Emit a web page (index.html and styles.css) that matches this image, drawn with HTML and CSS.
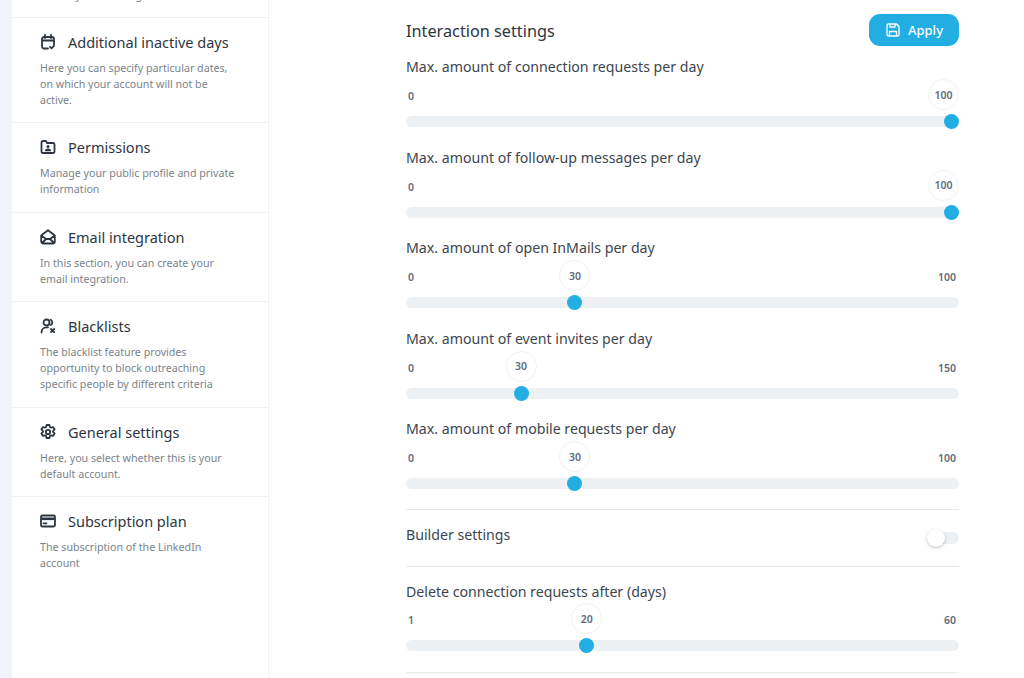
FILE: index.html
```html
<!DOCTYPE html>
<html lang="en">
<head>
<meta charset="utf-8">
<title>Settings</title>
<link rel="stylesheet" href="styles.css">
</head>
<body>
<div class="panel">
  <aside class="sidebar">
    <div class="stub"><p class="desc">Define your working hours</p></div>
    <section class="item item-3">
      <h3 class="title"><svg class="icon" viewBox="0 0 16 16"><path d="M5 1v3M11 1v3M2 6.500h12M8 14.500H4a2 2 0 0 1-2-2V5a2 2 0 0 1 2-2h8a2 2 0 0 1 2 2v6M10 12.800l1.500 1.500 2.500-2.500"/></svg>Additional inactive days</h3>
      <p class="desc">Here you can specify particular dates, on which your account will not be active.</p>
    </section>
    <section class="item">
      <h3 class="title"><svg class="icon" viewBox="0 0 16 16"><path d="M1.500 12.500V3.500A1.500 1.500 0 0 1 3 2h2.500a1 1 0 0 1 1 .7L7 4h6A1.500 1.500 0 0 1 14.500 5.500v7A1.500 1.500 0 0 1 13 14H3a1.500 1.500 0 0 1-1.500-1.500z"/><path class="solid" d="M4.800 12.200c0-1.800 1.300-2.800 3.200-2.800s3.200 1 3.200 2.800z"/><circle class="solid" cx="8" cy="7.600" r="1.500"/></svg>Permissions</h3>
      <p class="desc">Manage your public profile and private information</p>
    </section>
    <section class="item">
      <h3 class="title"><svg class="icon" viewBox="0 0 16 16"><path d="M1.200 6.500 8 1.200l6.800 5.300V12.500a2 2 0 0 1-2 2h-9.600a2 2 0 0 1-2-2zM1.500 6.800 6 10h4l4.500-3.200M2 14 6 10M14 14l-4-4"/></svg>Email integration</h3>
      <p class="desc">In this section, you can create your email integration.</p>
    </section>
    <section class="item item-tall">
      <h3 class="title"><svg class="icon" viewBox="0 0 16 16"><circle cx="6.500" cy="4.500" r="3"/><path d="M10.800 1.800a3 3 0 0 1 0 5.200M1.500 14.500c0-3 2-5.200 5-5.200h1.500M11 11l3.200 3.200M14.200 11 11 14.200"/></svg>Blacklists</h3>
      <p class="desc">The blacklist feature provides opportunity to block outreaching specific people by different criteria</p>
    </section>
    <section class="item">
      <h3 class="title"><svg class="icon" viewBox="0 0 16 16"><circle cx="8" cy="8" r="2.200"/><path d="M6.600 1h2.800l.5 2 1.300.7 2-.6 1.400 2.400-1.500 1.400v1.200l1.500 1.400-1.400 2.400-2-.6-1.300.7-.5 2H6.600l-.5-2-1.300-.7-2 .6-1.400-2.400 1.500-1.400V6.900L1.400 5.500l1.400-2.400 2 .6 1.300-.7z"/></svg>General settings</h3>
      <p class="desc">Here, you select whether this is your default account.</p>
    </section>
    <section class="item item-last">
      <h3 class="title"><svg class="icon" viewBox="0 0 16 16"><rect x="1" y="2.500" width="14" height="11" rx="1.500"/><path class="thick" d="M1.500 5.800h13"/><path d="M3.500 10.300h3"/></svg>Subscription plan</h3>
      <p class="desc">The subscription of the LinkedIn account</p>
    </section>
  </aside>
  <main class="content">
    <header class="head">
      <h2 class="heading">Interaction settings</h2>
      <button class="apply"><svg class="save" viewBox="0 0 16 16"><path d="M2 3.500A1.500 1.500 0 0 1 3.500 2h8L14 4.500v8a1.500 1.500 0 0 1-1.500 1.500h-9A1.500 1.500 0 0 1 2 12.500zM5 2v3h5V2M4.500 14V9.500h7V14"/></svg>Apply</button>
    </header>
    <div class="slider"><div class="label">Max. amount of connection requests per day</div><div class="range"><span>0</span></div><div class="track" style="--v:1"><span class="bubble">100</span><span class="thumb"></span></div></div>
    <div class="slider"><div class="label">Max. amount of follow-up messages per day</div><div class="range"><span>0</span></div><div class="track" style="--v:1"><span class="bubble">100</span><span class="thumb"></span></div></div>
    <div class="slider"><div class="label">Max. amount of open InMails per day</div><div class="range"><span>0</span><span>100</span></div><div class="track" style="--v:.3"><span class="bubble">30</span><span class="thumb"></span></div></div>
    <div class="slider"><div class="label">Max. amount of event invites per day</div><div class="range"><span>0</span><span>150</span></div><div class="track" style="--v:.2"><span class="bubble">30</span><span class="thumb"></span></div></div>
    <div class="slider"><div class="label">Max. amount of mobile requests per day</div><div class="range"><span>0</span><span>100</span></div><div class="track" style="--v:.3"><span class="bubble">30</span><span class="thumb"></span></div></div>
    <div class="toggle-row"><span class="label label-up">Builder settings</span><span class="toggle"><span class="knob"></span></span></div>
    <div class="slider slider-solo"><div class="label">Delete connection requests after (days)</div><div class="range range-solo"><span>1</span><span>60</span></div><div class="track" style="--v:.322"><span class="bubble">20</span><span class="thumb"></span></div></div>
  </main>
</div>
</body>
</html>
```
FILE: styles.css
```css
* { box-sizing: border-box; }
html, body { margin: 0; height: 678px; overflow: hidden; }
body { background: #f1f5f9; font-family: "Noto Sans", sans-serif; padding-left: 12px; }
.panel { display: flex; height: 678px; background: #fff; }
.sidebar { width: 257px; flex: none; border-right: 1px solid #f0f2f5; }
.stub { height: 18px; overflow: hidden; display: flex; align-items: flex-end; padding: 0 28px; border-bottom: 1px solid #f0f2f5; }
.stub .desc { margin-bottom: 14px; flex: none; }
.item { height: 89.500px; padding: 12px 28px 0; border-bottom: 1px solid #f0f2f5; }
.item-3 { height: 105px; }
.item-tall { height: 105.500px; }
.item-last { border-bottom: 0; }
.title { display: flex; align-items: center; margin: 0 0 6px; height: 24px; font-size: 14.500px; font-weight: 400; color: #2d3640; }
.icon { width: 16px; height: 16px; margin-right: 12px; flex: none; fill: none; stroke: #2d3640; stroke-width: 1.800; stroke-linecap: round; stroke-linejoin: round; }
.icon .solid { fill: #2d3640; stroke: none; }
.icon .thick { stroke-width: 2.600; stroke-linecap: butt; }
.desc { margin: 0; font-size: 10.660px; line-height: 16px; color: #7a838c; }
.content { margin-left: 137px; width: 553px; flex: none; }
.head { display: flex; justify-content: space-between; align-items: center; height: 47px; margin-top: 9px; padding-bottom: 3px; }
.heading { margin: 0; font-size: 16.250px; font-weight: 400; color: #2d3640; }
.apply { display: flex; align-items: center; justify-content: center; gap: 7px; width: 90px; height: 32px; margin-top: -2px; border: 0; border-radius: 11px; background: #22ade3; color: #fff; font: 500 13px "Noto Sans", sans-serif; padding: 0; }
.save { width: 16px; height: 16px; fill: none; stroke: #fff; stroke-width: 1.300; stroke-linejoin: round; }
.slider { height: 90.500px; }
.label { font-size: 14.170px; line-height: 22px; color: #3c4650; }
.label-up { margin-bottom: 6px; }
.range { display: flex; justify-content: space-between; height: 38px; padding: 10px 3px 0 2px; font-size: 10.500px; line-height: 16px; font-weight: 600; color: #5f6b7c; }
.range-solo { padding-top: 9px; height: 37.500px; }
.track { position: relative; height: 11px; border-radius: 6px; background: #eef1f3; }
.thumb { position: absolute; top: -2px; left: calc((100% - 15px) * var(--v)); width: 15px; height: 15px; border-radius: 50%; background: #22ade3; }
.bubble { position: absolute; top: -37px; left: min(calc((100% - 15px) * var(--v) - 8px), calc(100% - 31px)); width: 31px; height: 31px; border: 1px solid #f1f2f4; border-radius: 50%; background: #fff; display: flex; align-items: center; justify-content: center; font-size: 10.500px; font-weight: 600; color: #5f6b7c; }
.toggle-row { display: flex; justify-content: space-between; align-items: center; height: 58px; border-top: 1px solid #e8eaed; border-bottom: 1px solid #e8eaed; }
.toggle { position: relative; width: 32px; height: 12px; border-radius: 6px; background: #eef1f3; }
.knob { position: absolute; left: 0; top: -3px; width: 18px; height: 18px; border-radius: 50%; background: #fff; box-shadow: 0 1px 3px rgba(0,0,0,.25); }
.slider-solo { height: 106px; padding-top: 14px; border-bottom: 1px solid #e8eaed; }
```
